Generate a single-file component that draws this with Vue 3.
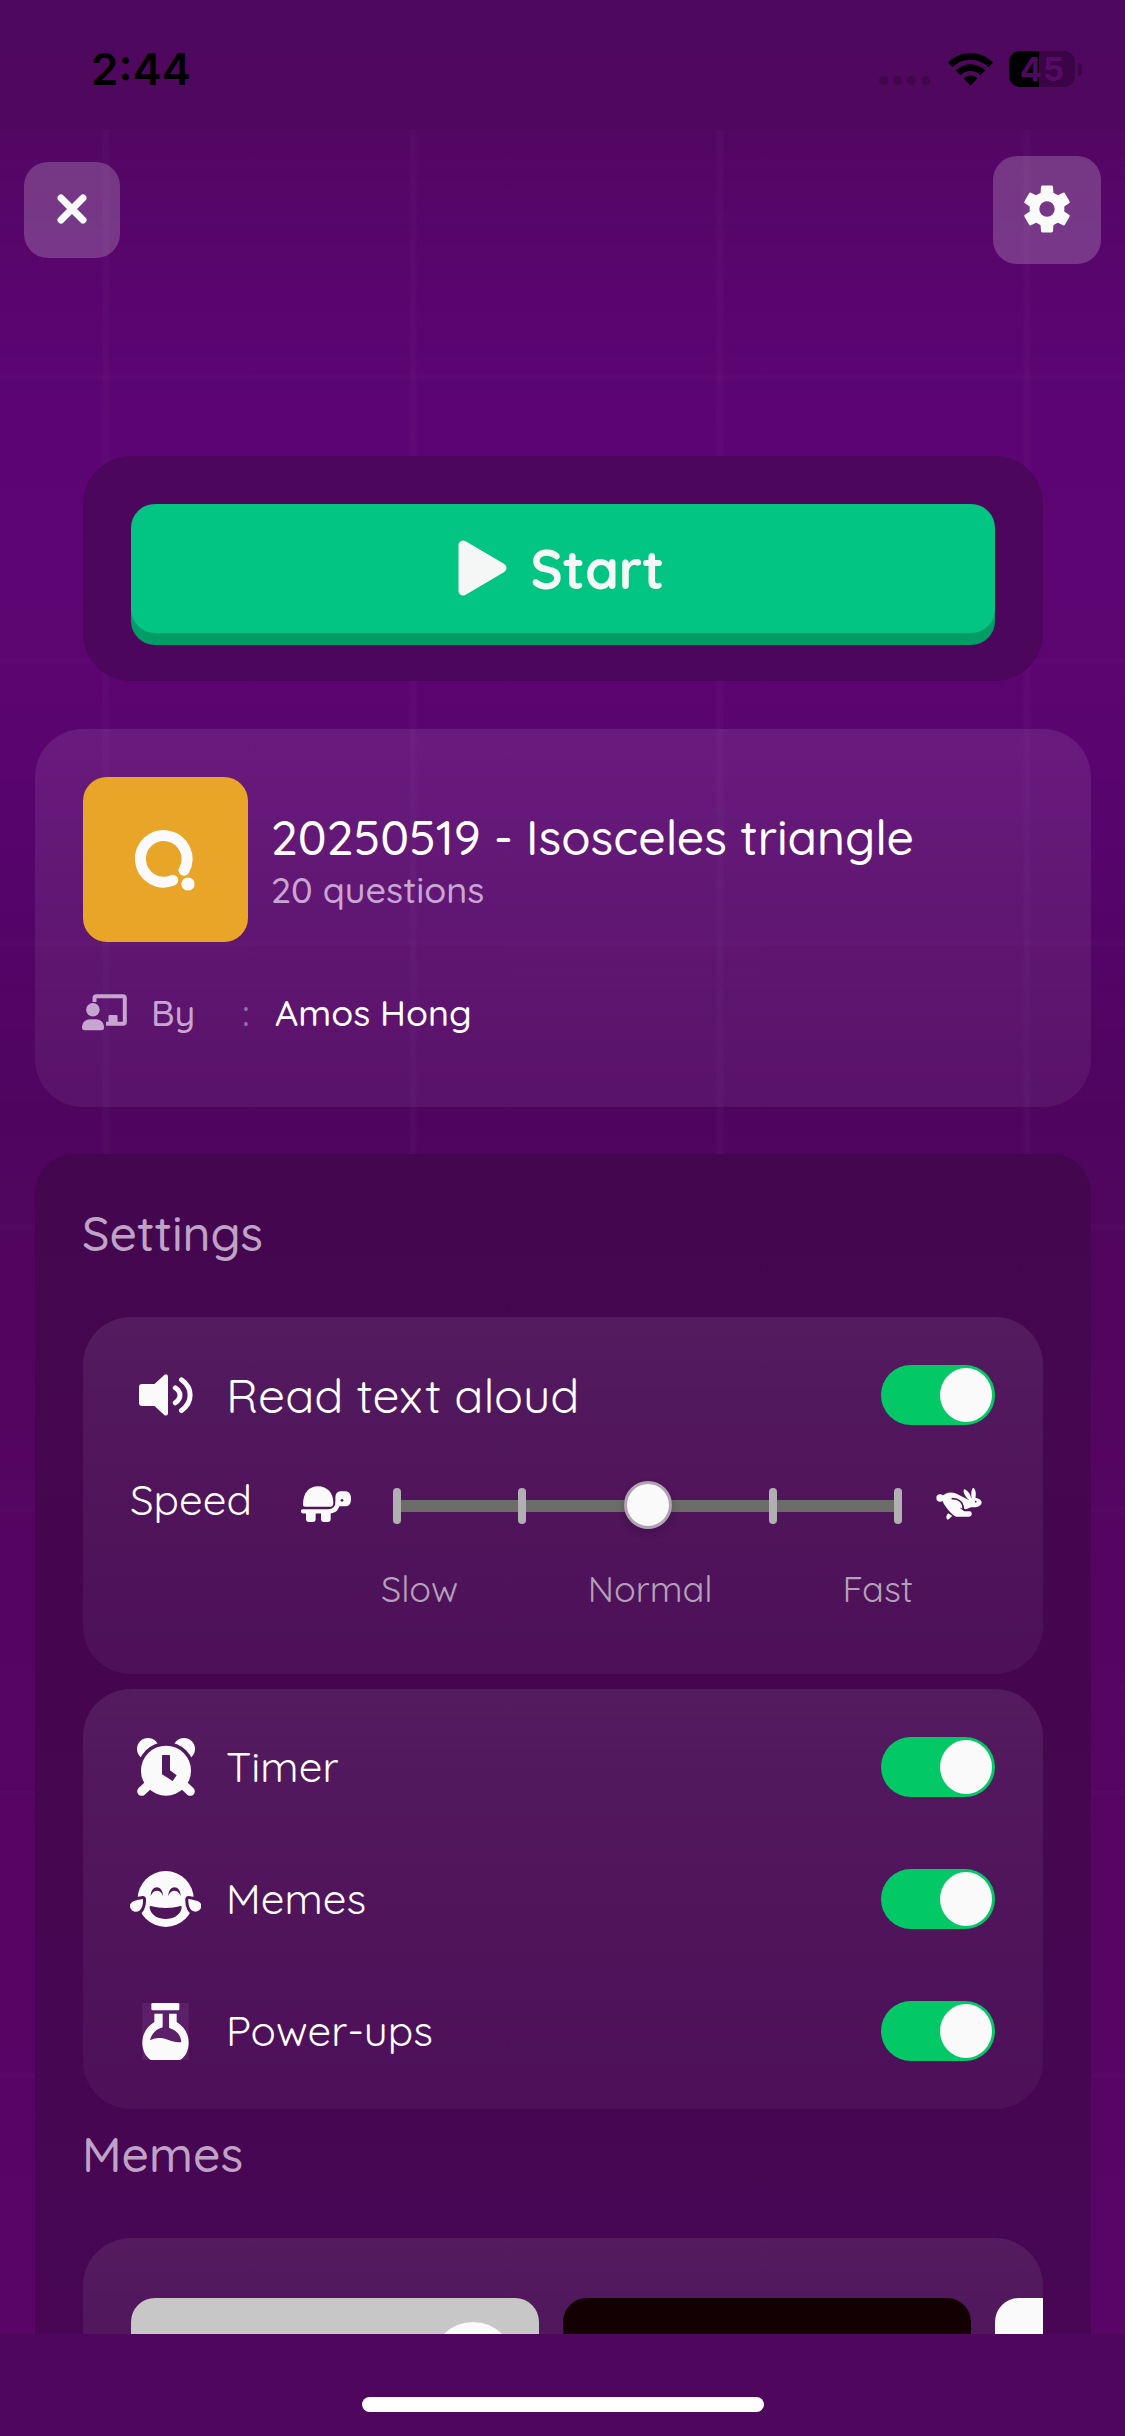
<script setup>
import { reactive } from 'vue'

const quiz = { title: '20250519 - Isosceles triangle', count: '20 questions', author: 'Amos Hong' }
const state = reactive({ read: true, timer: true, memes: true, powerups: true })
const options = [
  { key: 'timer', label: 'Timer' },
  { key: 'memes', label: 'Memes' },
  { key: 'powerups', label: 'Power-ups' },
]
</script>

<template>
  <div class="screen">
    <header class="status">
      <span class="time">2:44</span>
      <div class="indicators">
        <div class="dots"><i></i><i></i><i></i><i></i></div>
        <svg class="wifi" width="45" height="33" viewBox="0 0 45 33">
          <path d="M22.5 0C31.500 0 39 3.600 45 9.400L40.400 14.200C35.500 9.500 29.500 6.800 22.500 6.800S9.500 9.500 4.600 14.200L0 9.400C6 3.600 13.500 0 22.500 0Z" />
          <path d="M22.500 11.200C28.300 11.200 33.300 13.500 37.200 17.400L32.500 22.200C29.700 19.500 26.300 18 22.500 18S15.300 19.500 12.500 22.200L7.800 17.400C11.700 13.500 16.700 11.200 22.500 11.200Z" />
          <path d="M22.500 22.600C25.200 22.600 27.600 23.600 29.500 25.300L22.500 32.800L15.500 25.300C17.400 23.600 19.800 22.600 22.500 22.600Z" />
        </svg>
        <div class="battery"><b>4</b><em>5</em></div>
        <i class="nub"></i>
      </div>
    </header>

    <main class="body">
      <nav class="topbar">
        <button class="square close" aria-label="Close">
          <svg width="32" height="32" viewBox="-16 -16 32 32"><path d="M-11 -11L11 11M11 -11L-11 11" stroke="#fafafa" stroke-width="7" stroke-linecap="round" /></svg>
        </button>
        <button class="square gear" aria-label="Settings">
          <svg width="48" height="48" viewBox="-24 -24 48 48" fill="#fafafa">
            <mask id="hub"><rect x="-24" y="-24" width="48" height="48" fill="#fff" /><circle r="7.700" fill="#000" /></mask>
            <g mask="url(#hub)">
              <circle r="17.400" />
              <path id="tooth" d="M-4.500 -23.400H4.500Q6 -23.400 6 -22L6.600 -14V14L6 22Q6 23.400 4.500 23.400H-4.500Q-6 23.400 -6 22L-6.600 14V-14L-6 -22Q-6 -23.400 -4.500 -23.400Z" />
              <use href="#tooth" transform="rotate(60)" />
              <use href="#tooth" transform="rotate(120)" />
            </g>
          </svg>
        </button>
      </nav>

      <section class="start-panel">
        <button class="start">
          <svg width="49" height="56" viewBox="0 0 49 56"><path d="M5 5V51L44 28Z" fill="#f5f7f6" stroke="#f5f7f6" stroke-width="9" stroke-linejoin="round" /></svg>
          <span>Start</span>
        </button>
      </section>

      <section class="info">
        <div class="quiz">
          <div class="thumb">
            <svg width="165" height="165" viewBox="0 0 165 165">
              <path d="M101 93.300A23.300 23.300 0 1 0 89.800 103.300" fill="none" stroke="#fafafa" stroke-width="11" stroke-linecap="round" />
              <circle cx="105" cy="107" r="6.600" fill="#fafafa" />
            </svg>
          </div>
          <div class="names">
            <h1>{{ quiz.title }}</h1>
            <p>{{ quiz.count }}</p>
          </div>
        </div>
        <div class="by">
          <svg width="45" height="37" viewBox="0 0 45 37" fill="#c6a6d0">
            <path d="M12.500 8V4Q12.500 2.200 14.300 2.200H41Q42.800 2.200 42.800 4V28Q42.800 29.800 41 29.800H24" fill="none" stroke="#c6a6d0" stroke-width="4" />
            <rect x="26.500" y="21" width="9" height="8" rx="1" />
            <circle cx="10.900" cy="15.700" r="6.800" />
            <path d="M0 33.500C0 28 4 25.200 8 25.200H14C18 25.200 22 28 22 33.500Q22 36.300 19.500 36.300H2.500Q0 36.300 0 33.500Z" />
          </svg>
          <span class="by-label">By</span>
          <span class="colon">:</span>
          <span class="author">{{ quiz.author }}</span>
        </div>
      </section>

      <section class="settings">
        <h2>Settings</h2>
        <div class="card speech">
          <div class="row">
            <span class="icon">
              <svg width="54" height="42" viewBox="0 0 54 42" fill="#fafafa">
                <path d="M3 10H15.500L25.500 .8Q29 -.8 29 3V39Q29 42.600 25.500 41.200L15.500 32H3Q0 32 0 29V13Q0 10 3 10Z" />
                <path d="M36.300 13.800C42.500 18 42.500 24.500 36.300 28.800M42.500 5.800C54 14 54 28 42.500 36.600" fill="none" stroke="#fafafa" stroke-width="5" stroke-linecap="round" />
              </svg>
            </span>
            <span class="label big">Read text aloud</span>
            <span class="toggle" :class="{ on: state.read }"><i></i></span>
          </div>
          <div class="speed">
            <span class="speed-label">Speed</span>
            <svg class="turtle" width="50" height="36" viewBox="33 47 150 108" fill="#fafafa">
              <path d="M39 103C39 66 58 48 84 48C112 48 130 68 130 98Q130 109 122 109H45Q39 109 39 103Z" />
              <path d="M39 123H114C132 123 143 114 143 94" fill="none" stroke="#fafafa" stroke-width="13" stroke-linecap="round" />
              <path d="M151 63H168Q183 65 183 86Q183 108 168 108H140Q136 104 136 80Q137 65 151 63Z" />
              <rect x="48" y="120" width="29" height="35" rx="9" />
              <rect x="93" y="120" width="29" height="35" rx="9" />
              <circle cx="156" cy="90" r="4" fill="#4f1559" />
            </svg>
            <div class="slider">
              <i class="tick"></i><i class="tick"></i><i class="knob"></i><i class="tick"></i><i class="tick"></i>
            </div>
            <svg class="rabbit" width="46" height="33" viewBox="47 50 138 99" fill="#fafafa">
              <circle cx="59" cy="83" r="11" />
              <path d="M64 80C74 64 100 62 116 74L144 88C152 78 184 82 184 97C182 108 170 111 152 111L137 117L118 112L132 123H148C157 124 156 139 147 139H108C98 139 62 98 64 80Z" />
              <path d="M96 85C113 85 129 94 129 117" fill="none" stroke="#4f1559" stroke-width="5" stroke-linecap="round" />
              <path d="M131 57C140 58 152 72 153 87L143 87C133 76 127 64 131 57Z" />
              <path d="M158 52C166 54 169 72 164 87L154 84C151 70 153 58 158 52Z" />
              <path d="M84 129L96 137L83 148C75 146 77 135 84 129Z" />
              <circle cx="166" cy="94" r="2.500" fill="#4f1559" />
            </svg>
          </div>
          <div class="scale"><span>Slow</span><span>Normal</span><span>Fast</span></div>
        </div>

        <div class="card options">
          <div v-for="o in options" :key="o.key" class="row">
            <span class="icon">
              <svg v-if="o.key === 'timer'" width="58" height="58" viewBox="231 171 174 174" fill="#fafafa">
                <mask id="bells"><rect x="231" y="171" width="174" height="174" fill="#fff" /><circle cx="318" cy="269" r="86" fill="#000" /></mask>
                <mask id="hands"><rect x="231" y="171" width="174" height="174" fill="#fff" /><path d="M309 222H327Q330 222 330 225V268L350 283L338 300L306 280V225Q306 222 309 222Z" fill="#000" /></mask>
                <g mask="url(#bells)"><circle cx="264" cy="204" r="33" /><circle cx="372" cy="204" r="33" /></g>
                <circle cx="318" cy="269" r="75" mask="url(#hands)" />
                <path d="M245 331L270 308M391 331L366 308" stroke="#fafafa" stroke-width="27" stroke-linecap="round" />
              </svg>
              <svg v-else-if="o.key === 'memes'" width="71" height="56" viewBox="210 570 213 168" fill="#fafafa">
                <mask id="face">
                  <rect x="210" y="570" width="213" height="168" fill="#fff" />
                  <path d="M249 654C250 676 243 692 228 692C217 692 210 684 210 674C210 661 228 657 249 654Z" stroke="#000" stroke-width="18" stroke-linejoin="round" fill="#000" />
                  <path d="M385 654C384 676 391 692 406 692C417 692 424 684 424 674C424 661 406 657 385 654Z" stroke="#000" stroke-width="18" stroke-linejoin="round" fill="#000" />
                  <path d="M272 645C272 610 309 610 309 645C302 624 280 624 272 645Z" fill="#000" />
                  <path d="M325 645C325 610 362 610 362 645C354 624 332 624 325 645Z" fill="#000" />
                  <path d="M272 675C300 683 335 683 362 675Q366 674 365 680C358 725 276 725 269 680Q268 674 272 675Z" fill="#000" />
                </mask>
                <circle cx="317" cy="654" r="84" mask="url(#face)" />
                <path d="M249 654C250 676 243 692 228 692C217 692 210 684 210 674C210 661 228 657 249 654Z" />
                <path d="M385 654C384 676 391 692 406 692C417 692 424 684 424 674C424 661 406 657 385 654Z" />
              </svg>
              <svg v-else width="47" height="57" viewBox="248 969 141 171" fill="#fafafa">
                <rect x="249" y="969" width="139" height="171" fill="#a060b0" opacity=".18" />
                <rect x="276" y="969" width="84" height="22" rx="4" />
                <path fill-rule="evenodd" d="M285 1001H310V1042C290 1048 277 1060 272 1081C280 1076 290 1073 303 1074C325 1075 340 1090 366 1086C364 1064 350 1050 329 1043V1001H352V1026C375 1040 388 1062 388 1088C388 1112 378 1130 362 1140H275C259 1130 249 1112 249 1088C249 1062 262 1040 285 1026Z" />
              </svg>
            </span>
            <span class="label">{{ o.label }}</span>
            <span class="toggle" :class="{ on: state[o.key] }"><i></i></span>
          </div>
        </div>

        <h2 class="memes-title">Memes</h2>
        <div class="card gallery">
          <div class="meme grey"><i></i></div>
          <div class="meme dark"></div>
          <div class="meme light"></div>
        </div>
      </section>
    </main>

    <footer class="home"><i></i></footer>
  </div>
</template>

<style>
body { background: #4f075e; }
</style>

<style scoped>
* { box-sizing: border-box; }
h1, h2, p { margin: 0; font-weight: 500; }
button { border: 0; padding: 0; font: inherit; color: inherit; }
svg { display: block; flex: none; }
i { display: block; flex: none; }

.screen {
  width: 1125px; height: 2436px; overflow: hidden;
  display: flex; flex-direction: column;
  background: #4f085e; color: #fff;
  font-family: Quicksand, Lato, sans-serif; font-weight: 500;
}

.status {
  flex: none; height: 130px; padding: 0 43px 0 91px;
  display: flex; justify-content: space-between;
  background: linear-gradient(#4e085d, #50085e);
  font-family: Inter, "Liberation Sans", sans-serif; color: #000;
}
.time { font-size: 44px; font-weight: 600; line-height: 54px; margin-top: 42px; }
.indicators { display: flex; align-items: center; height: 36px; margin-top: 51px; }
.dots { display: flex; gap: 5px; margin: 23px 18px 0 0; }
.dots i { width: 9px; height: 9px; border-radius: 50%; background: #42064f; }
.wifi { margin-right: 16px; }
.battery {
  width: 66px; height: 36px; border-radius: 11px;
  display: flex; justify-content: center; align-items: center; gap: 1px;
  font-size: 33px; line-height: 36px;
  background: linear-gradient(90deg, #000 30px, #3a0446 30px);
}
.battery b { font-weight: 700; color: #4e085d; }
.battery em { font-style: normal; font-weight: 700; color: #590a69; }
.nub { width: 4px; height: 13px; margin-left: 3px; border-radius: 0 5px 5px 0; background: #3a0446; }

.body {
  flex: none; height: 2204px; overflow: hidden;
  background:
    repeating-linear-gradient(90deg, transparent 0 101px, rgba(255,255,255,.018) 104px 108px, transparent 111px 307px),
    repeating-linear-gradient(transparent 0 243px, rgba(255,255,255,.013) 246px 249px, transparent 252px 283px),
    linear-gradient(#520763, #58056c 120px, #5c0474 270px, #5d0571 500px, #5a0470 620px, #540468 790px, #4f0560 980px, #53055f 1270px, #560464 1440px, #590467 2204px);
}
.topbar { display: flex; justify-content: space-between; align-items: center; height: 108px; margin: 26px 24px 0; }
.square { display: flex; align-items: center; justify-content: center; border-radius: 24px; background: rgba(255,255,255,.2); padding-bottom: 2px; }
.close { width: 96px; height: 96px; }
.gear { width: 108px; height: 108px; }

.start-panel { margin: 192px 82px 0 83px; height: 225px; padding: 48px; border-radius: 48px; background: #4c065b; }
.start {
  width: 864px; height: 129px; border-radius: 24px; background: #02c583; box-shadow: 0 12px 0 #029c67;
  display: flex; align-items: center; justify-content: center; gap: 24px; padding-right: 4px;
  font-size: 54px; font-weight: 700; line-height: 68px; color: #f5f7f6;
}
.start svg { margin-top: -2px; }

.info {
  margin: 48px 34px 0 35px; height: 378px; padding: 48px; border-radius: 48px;
  background: linear-gradient(rgba(255,255,255,.09), rgba(255,255,255,.055));
}
.quiz { display: flex; align-items: center; gap: 23px; }
.thumb { width: 165px; height: 165px; border-radius: 24px; background: #e8a528; flex: none; }
h1 { font-size: 48px; line-height: 60px; white-space: nowrap; }
p { font-size: 36px; line-height: 45px; color: #c9a5d4; }
.by { display: flex; align-items: center; height: 45px; margin-top: 48px; font-size: 36px; line-height: 45px; }
.by svg { margin-left: -1px; }
.by-label { width: 91px; margin-left: 24px; color: #c6a6d0; }
.colon { width: 33px; color: #9c6bab; }

.settings {
  margin: 47px 34px 0 35px; height: 1300px; padding: 49px 48px 0; border-radius: 38px;
  background: linear-gradient(#44074f, #46064f 550px, #480654 1180px);
}
h2 { margin-left: -1px; font-size: 48px; line-height: 60px; color: #bfa3c6; }
.card { border-radius: 48px; padding: 48px; font-weight: 400; background: linear-gradient(#541b5f, #50155b 45%, #4d1059); }
.speech { height: 357px; margin-top: 54px; }
.row { display: flex; align-items: center; height: 60px; }
.icon { width: 69px; height: 60px; display: flex; align-items: center; justify-content: center; }
.label { flex: 1; margin-left: 26px; font-size: 42px; line-height: 60px; }
.label.big { font-size: 48px; }
.toggle { width: 114px; height: 60px; padding: 3px; border-radius: 30px; display: flex; background: #02c966; }
.toggle i { width: 52px; height: 54px; border-radius: 50%; background: #fafafa; }
.toggle.on { justify-content: flex-end; }

.speed { display: flex; align-items: center; height: 60px; margin-top: 51px; }
.speed-label { width: 169px; font-size: 42px; line-height: 60px; margin-top: -12px; margin-left: -1px; }
.turtle { margin: -4px 0 0 2px; }
.slider {
  width: 509px; height: 60px; margin-left: 42px;
  display: flex; align-items: center; justify-content: space-between;
  background: linear-gradient(#6c6c6a, #6c6c6a) 4px 24px / 500px 12px no-repeat;
}
.tick { width: 8px; height: 36px; border-radius: 4px; background: #b1afb1; }
.knob { width: 48px; height: 48px; margin: -2px -20px 0; border-radius: 50%; background: #fafafa; border: 3px solid #b0a1b3; box-shadow: 0 3px 8px rgba(0,0,0,.2); }
.rabbit { margin: -6px 0 0 34px; }
.scale { display: flex; justify-content: space-between; margin: 30px 82px 0 250px; font-size: 36px; line-height: 45px; color: #b5a0ba; }

.options { height: 420px; margin-top: 15px; display: flex; flex-direction: column; gap: 72px; }
.memes-title { margin-top: 15px; }
.gallery { height: 300px; margin-top: 54px; padding: 60px 0 0 48px; display: flex; gap: 24px; overflow: hidden; }
.meme { flex: none; width: 408px; height: 240px; border-radius: 24px; overflow: hidden; }
.grey { background: #c7c7c7; }
.grey i { width: 82px; height: 82px; border-radius: 50%; background: #fafafa; margin: 24px 0 0 301px; }
.dark { background: #130002; }
.light { background: #fafafa; }

.home { flex: 1; background: #4f075e; padding-top: 63px; }
.home i { width: 402px; height: 15px; margin: 0 auto; border-radius: 8px; background: #fff; }
</style>
